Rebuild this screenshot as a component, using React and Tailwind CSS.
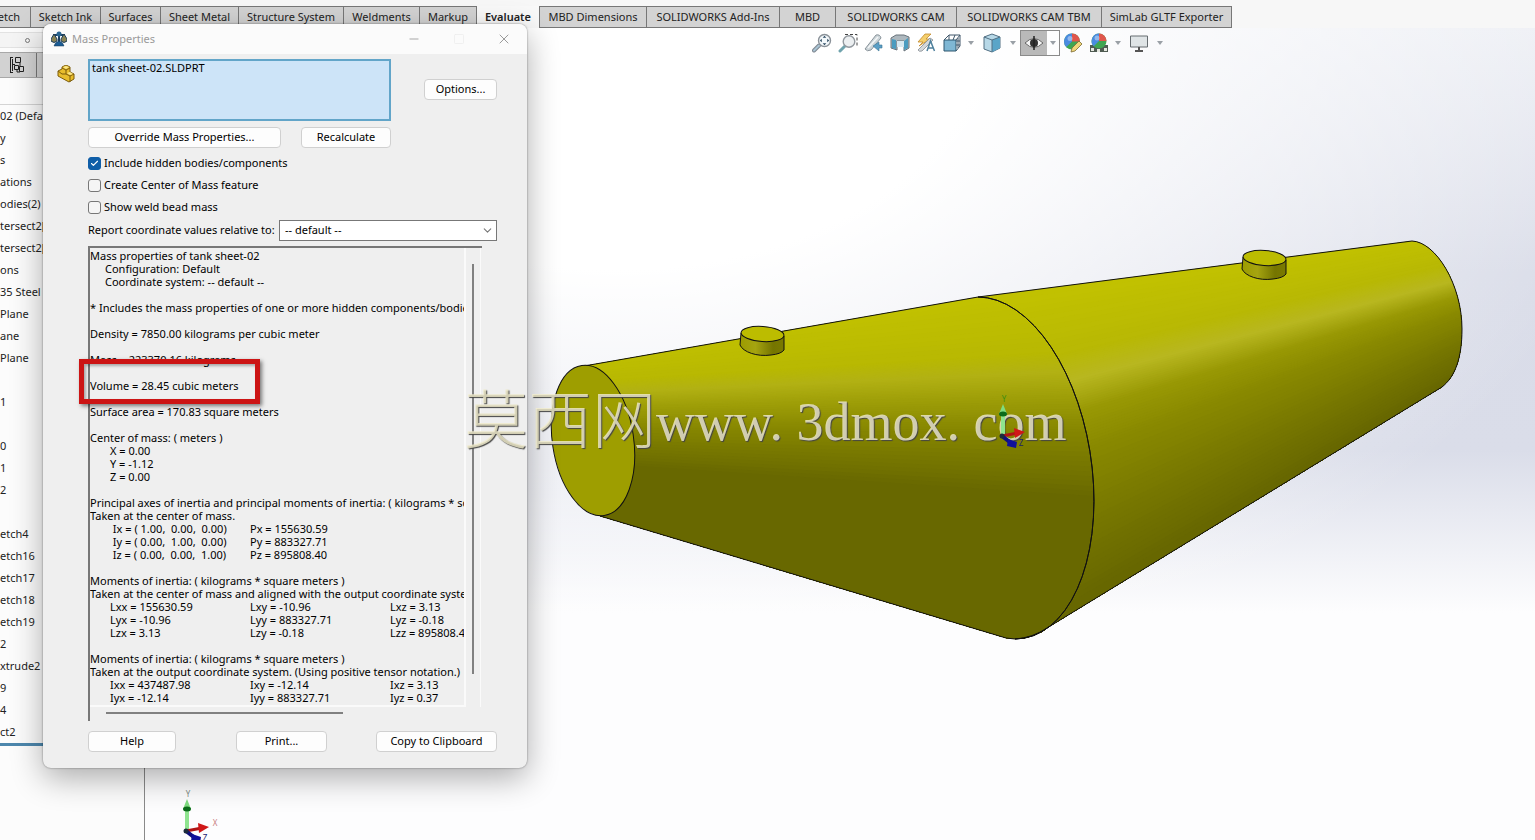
import React, {useState} from 'react';
import {Check, ChevronDown, Minus, Square, X} from "lucide-react";

const tabs = [
	{name: 'Sketch', width: 'w-[31px] justify-end'},
	{name: 'Sketch Ink', width: 'w-[70px] justify-center'},
	{name: 'Surfaces', width: 'w-[60px] justify-center'},
	{name: 'Sheet Metal', width: 'w-[78px] justify-center'},
	{name: 'Structure System', width: 'w-[105px] justify-center'},
	{name: 'Weldments', width: 'w-[76px] justify-center'},
	{name: 'Markup', width: 'w-[57px] justify-center'},
	{name: 'Evaluate', width: 'w-[63px] justify-center'},
	{name: 'MBD Dimensions', width: 'w-[107px] justify-center'},
	{name: 'SOLIDWORKS Add-Ins', width: 'w-[133px] justify-center'},
	{name: 'MBD', width: 'w-[56px] justify-center'},
	{name: 'SOLIDWORKS CAM', width: 'w-[121px] justify-center'},
	{name: 'SOLIDWORKS CAM TBM', width: 'w-[145px] justify-center'},
	{name: 'SimLab GLTF Exporter', width: 'w-[130px] justify-center'},
]

const treeItems = [
	'02 (Default', 'y', 's', 'ations', 'odies(2)', 'tersect2[1]', 'tersect2[2]', 'ons', '35 Steel',
	'Plane', 'ane', 'Plane', '', '1', '', '0', '1', '2', '', 'etch4', 'etch16', 'etch17', 'etch18',
	'etch19', '2', 'xtrude2', '9', '4', 'ct2',
]

const report = [
	'Mass properties of tank sheet-02',
	{indent: 'Configuration: Default'},
	{indent: 'Coordinate system: -- default --'},
	'',
	'* Includes the mass properties of one or more hidden components/bodies.',
	'',
	'Density = 7850.00 kilograms per cubic meter',
	'',
	'Mass = 223370.16 kilograms',
	'',
	'Volume = 28.45 cubic meters',
	'',
	'Surface area = 170.83 square meters',
	'',
	'Center of mass: ( meters )',
	{cols: ['X = 0.00']},
	{cols: ['Y = -1.12']},
	{cols: ['Z = 0.00']},
	'',
	'Principal axes of inertia and principal moments of inertia: ( kilograms * square meters )',
	'Taken at the center of mass.',
	{cols: [' Ix = ( 1.00,  0.00,  0.00)', 'Px = 155630.59']},
	{cols: [' Iy = ( 0.00,  1.00,  0.00)', 'Py = 883327.71']},
	{cols: [' Iz = ( 0.00,  0.00,  1.00)', 'Pz = 895808.40']},
	'',
	'Moments of inertia: ( kilograms * square meters )',
	'Taken at the center of mass and aligned with the output coordinate system.',
	{cols: ['Lxx = 155630.59', 'Lxy = -10.96', 'Lxz = 3.13']},
	{cols: ['Lyx = -10.96', 'Lyy = 883327.71', 'Lyz = -0.18']},
	{cols: ['Lzx = 3.13', 'Lzy = -0.18', 'Lzz = 895808.40']},
	'',
	'Moments of inertia: ( kilograms * square meters )',
	'Taken at the output coordinate system. (Using positive tensor notation.)',
	{cols: ['Ixx = 437487.98', 'Ixy = -12.14', 'Ixz = 3.13']},
	{cols: ['Iyx = -12.14', 'Iyy = 883327.71', 'Iyz = 0.37']},
]

// [y on the left side, y on the right side, rgb]
const leftShade = [
	[345, 275, [194, 194, 0]],
	[380, 350, [184, 184, 2]],
	[392, 370, [178, 177, 20]],
	[407, 396, [158, 158, 8]],
	[430, 432, [132, 132, 0]],
	[466, 500, [102, 102, 0]],
]

const rightShade = [
	[280, 228, [194, 194, 0]],
	[350, 262, [184, 184, 4]],
	[378, 280, [184, 183, 32]],
	[412, 297, [152, 152, 4]],
	[455, 315, [136, 136, 0]],
	[530, 345, [118, 118, 0]],
	[605, 378, [102, 102, 0]],
]

const STEPS = 14

const makeBands = (stops, xl, xr) => {
	const bands = []
	for (let i = 0; i < stops.length - 1; i++) {
		const [l1, r1, c1] = stops[i]
		const [l2, r2, c2] = stops[i + 1]
		for (let s = 0; s < STEPS; s++) {
			const t = s / STEPS
			const l = l1 + (l2 - l1) * t
			const r = r1 + (r2 - r1) * t
			const slope = (r - l) / (xr - xl)
			const color = c1.map((c, k) => Math.round(c + (c2[k] - c) * t))
			bands.push({
				points: `${xl - 120},${l - slope * 120} ${xr + 60},${r + slope * 60} ${xr + 60},720 ${xl - 120},720`,
				fill: `rgb(${color.join(',')})`,
			})
		}
	}
	return bands
}

const leftBands = makeBands(leftShade, 600, 1080)
const rightBands = makeBands(rightShade, 1075, 1455)

const LEFT_CONE = 'M584,366 L978,297 A94.9 172.4 -8.9 0 1 1015,639 L1006,638 L600,516 Z'
const RIGHT_CONE = 'M978,297 L1412,241 C1436,242 1462,285 1462,329 C1462,358 1455,377 1442,387 L1047,628 Q1032,638 1015,639 A94.9 172.4 -8.9 0 0 978,297 Z'

const Port = ({x, y}) => (
	<g stroke="#111" strokeWidth="1">
		<path d={`M${x},${y} L${x - 1},${y + 12} C${x + 2},${y + 19} ${x + 16},${y + 24} ${x + 30},${y + 22} Q${x + 40},${y + 21} ${x + 43},${y + 17} L${x + 43},${y + 3} Z`} fill="url(#portSide)"/>
		<ellipse cx={x + 21.5} cy={y + 1} rx="21.5" ry="7.5" transform={`rotate(4 ${x + 21.5} ${y + 1})`} fill="#bcbc00"/>
	</g>
)

const TankModel = () => (
	<svg className="absolute inset-0 h-full w-full" viewBox="145 28 1390 812" preserveAspectRatio="xMidYMid meet">
		<defs>
			<clipPath id="leftCone"><path d={LEFT_CONE}/></clipPath>
			<clipPath id="rightCone"><path d={RIGHT_CONE}/></clipPath>
			<linearGradient id="portSide">
				<stop offset="0" stopColor="#9c9c00"/>
				<stop offset="0.35" stopColor="#a5a410"/>
				<stop offset="0.75" stopColor="#757500"/>
				<stop offset="1" stopColor="#7a7a00"/>
			</linearGradient>
		</defs>
		<g clipPath="url(#rightCone)">
			<path d={RIGHT_CONE} fill="#c2c200"/>
			{rightBands.map((b, i) => <polygon key={i} points={b.points} fill={b.fill}/>)}
		</g>
		<g clipPath="url(#leftCone)">
			<path d={LEFT_CONE} fill="#c2c200"/>
			{leftBands.map((b, i) => <polygon key={i} points={b.points} fill={b.fill}/>)}
		</g>
		<path d={RIGHT_CONE} fill="none" stroke="#111" strokeWidth="1"/>
		<path d={LEFT_CONE} fill="none" stroke="#111" strokeWidth="1"/>
		<ellipse cx="593" cy="440.5" rx="40.6" ry="75.8" transform="rotate(-8.5 593 440.5)" fill="#9e9e00" stroke="#111"/>
		<Port x={741} y={333}/>
		<Port x={1243} y={257}/>
	</svg>
)

const Triad = ({labels}) => (
	<svg className="h-[56px] w-[44px] overflow-visible" viewBox="0 0 44 56">
		<path d="M9 41V19" stroke="#8fe48f" strokeWidth="4"/>
		<path d="M9 9l4 10H5z" fill="#7fdc7f"/>
		<ellipse cx="9" cy="19" rx="4" ry="2.5" fill="#0b6b1a"/>
		<path d="M8 41l16-3" stroke="#b01414" strokeWidth="3"/>
		<path d="M20 33l11 4-10 6z" fill="#d01818"/>
		<path d="M8 41l9 7" stroke="#10107c" strokeWidth="4"/>
		<path d="M14 44l9 3-1 6-9-2z" fill="#10109a"/>
		<circle cx="8" cy="41" r="2.5" fill="#1c2b3c"/>
		<text x="10" y="7" fontSize="8" fontFamily="Noto Sans, sans-serif" textAnchor="middle" fill={labels.y}>Y</text>
		{labels.x && <text x="37" y="36" fontSize="8" fontFamily="Noto Sans, sans-serif" textAnchor="middle" fill={labels.x}>X</text>}
		<text x="27" y="51" fontSize="8" fontFamily="Noto Sans, sans-serif" textAnchor="middle" fill="#1c1c70">Z</text>
	</svg>
)

const Caret = () => (
	<svg className="h-1 w-[6px]" viewBox="0 0 6 4"><path d="M0 0h6L3 4z" fill="#9aa0a6"/></svg>
)

const ToolButton = ({label, children}) => (
	<button type="button" aria-label={label} className="flex size-5 items-center justify-center">
		<svg className="size-5" viewBox="0 0 20 20" fill="none">{children}</svg>
	</button>
)

const ColorBall = ({cx, cy, r}) => (
	<g>
		<circle cx={cx} cy={cy} r={r} fill="#3fa551"/>
		<path d={`M${cx} ${cy}L${cx - r * 0.7} ${cy + r * 0.7}A${r} ${r} 0 0 1 ${cx} ${cy - r}Z`} fill="#4a8be0"/>
		<path d={`M${cx} ${cy}L${cx} ${cy - r}A${r} ${r} 0 0 1 ${cx + r} ${cy}Z`} fill="#e0564c"/>
		<circle cx={cx - 2} cy={cy - 3} r="2.5" fill="#fff" opacity="0.4"/>
	</g>
)

const ViewToolbar = () => (
	<div className="relative flex h-[30px] items-center pl-[667px]">
		<div className="flex items-center gap-[6px]">
			<ToolButton label="Zoom to Fit">
				<path d="M7 12.500l-5 5" stroke="#7f8790" strokeWidth="4" strokeLinecap="round"/>
				<path d="M7 12.500l-5 5" stroke="#a9c4d4" strokeWidth="2" strokeLinecap="round"/>
				<circle cx="12.500" cy="7.500" r="6" fill="#f3f8fb" stroke="#8b9299" strokeWidth="1.400"/>
				<path d="M12.500 2.800l1.800 2h-3.600zM12.500 12.200l1.800-2h-3.600zM7.800 7.500l2-1.800v3.600zM17.200 7.500l-2-1.800v3.600z" fill="#2c4a62"/>
			</ToolButton>
			<ToolButton label="Zoom to Area">
				<path d="M7 1.500h12v12" stroke="#444" strokeWidth="1" strokeDasharray="3 2"/>
				<path d="M7 13l-5 5" stroke="#6fa3ad" strokeWidth="3" strokeLinecap="round"/>
				<circle cx="11" cy="8.500" r="5.800" fill="#eceff1" stroke="#92989e" strokeWidth="1.400"/>
			</ToolButton>
			<ToolButton label="Previous View">
				<path d="M1 16L12 2q4-1 5 3L7 17q-4 2-6-1z" fill="#ccd5d9" stroke="#8a949b"/>
				<path d="M4 15L14 4" stroke="#f4f6f7" strokeWidth="1.500"/>
				<path d="M9 13l6-4v3h3v3h-3v3z" fill="#5b9fc6" stroke="#3d7696" strokeWidth="0.600"/>
			</ToolButton>
			<ToolButton label="Section View">
				<path d="M1 5l5-3h8l5 2v11l-5 3V8H7v9l-6-2z" fill="#aeb8be" stroke="#68737b"/>
				<path d="M2 6l4 1v9l-4-1zM14 8l4-3v10l-4 2z" fill="#4b9cc0"/>
				<path d="M7 8h7v6H7z" fill="#d8e9f1"/>
			</ToolButton>
			<ToolButton label="Dynamic Annotation Views">
				<path d="M9 1L2 9h5l-4 4 11-7h-4l5-5z" fill="#f4cf6d" stroke="#c38a2c" strokeWidth="0.800"/>
				<path d="M2 17L14 5l3 2L6 18q-3 1-4-1z" fill="#d3d8db" stroke="#858c92" strokeWidth="0.800"/>
				<path d="M11 18l3.500-10 4 10M12 15h5" stroke="#4f819d" strokeWidth="1.500"/>
			</ToolButton>
			<ToolButton label="View Orientation">
				<path d="M2 7l5-5h11v11l-4 5M7 2v5M13 2l-2 5M18 2l-4 5" stroke="#40576a"/>
				<path d="M2 7h12v11H2z" fill="#7fb7d4" stroke="#2f566f"/>
				<path d="M14 8h4M16 5v10M14 12h4" stroke="#40576a"/>
			</ToolButton>
		</div>
		<div className="ml-[6px] flex items-center gap-2">
			<Caret/>
			<ToolButton label="Display Style">
				<path d="M2 4l8-3 8 3v11l-8 4-8-3z" fill="#b7d8e7" stroke="#527084"/>
				<path d="M10 7l8-3v11l-8 4z" fill="#5aa5c8"/>
				<path d="M2 4l8 3v12M10 7l8-3" stroke="#527084"/>
			</ToolButton>
			<Caret/>
		</div>
		<div className="ml-[4px] flex h-[26px] w-[40px] items-center border border-[#8a8a8a]">
			<button type="button" aria-label="Hide/Show Items" className="flex h-full w-[26px] items-center justify-center bg-[#b9b9b9]">
				<svg className="h-4 w-5" viewBox="0 0 20 16" fill="none">
					<path d="M1 8q9-9 18 0q-9 9-18 0z" fill="#f4f4f4" stroke="#666"/>
					<circle cx="10" cy="8" r="4" fill="#333"/>
					<path d="M10 1v14" stroke="#222" strokeWidth="1.500"/>
				</svg>
			</button>
			<span className="flex flex-1 justify-center"><Caret/></span>
		</div>
		<div className="ml-[3px] flex items-center gap-[6px]">
			<ToolButton label="Edit Appearance">
				<ColorBall cx={9} cy={8.5} r={8}/>
				<path d="M8 19l1-4 7-7 3 3-7 7z" fill="#f0d67a" stroke="#7b6a31" strokeWidth="0.800"/>
			</ToolButton>
			<ToolButton label="Apply Scene">
				<path d="M1 12h18v7H1z" fill="#4f5b52"/>
				<path d="M2 15h3v3H2zM8 16h3v3H8zM15 15h3v3h-3z" fill="#e4e7df"/>
				<ColorBall cx={10} cy={8} r={7.5}/>
			</ToolButton>
		</div>
		<div className="ml-[6px] flex items-center gap-2">
			<Caret/>
			<ToolButton label="View Settings">
				<path d="M1.500 3h17v11h-17z" fill="#dfe4e6" stroke="#666c70"/>
				<path d="M10 14v4M6 18h8" stroke="#555" strokeWidth="2"/>
			</ToolButton>
			<Caret/>
		</div>
	</div>
)

const FeaturePanel = () => (
	<aside className="flex w-[145px] shrink-0 flex-col border-r border-[#8a8a8a] bg-[#fcfcfc]">
		<div className="mt-1 flex h-4 items-center border-y border-[#e2e2e2] bg-[#f4f4f4] pl-[25px]">
			<span className="size-[5px] rounded-full border border-[#777]"></span>
		</div>
		<div className="mt-1 flex h-[26px] border-y border-[#a8a8a8] bg-[#d2d2d2]">
			<button type="button" aria-label="Configuration Manager" className="flex w-[37px] items-center border-r border-[#777] pl-2">
				<svg className="size-[18px]" viewBox="0 0 18 18" fill="none" stroke="#222">
					<path d="M2.500 1v16M4.500 3v12M2 1.500h3M2 16.500h3M4 8.500h3"/>
					<path d="M7.500 1.500h5v5h-5zM6.500 9.500h4v4h-4zM11.500 10.500h4v5h-4zM12 7v4M9 14v2h3"/>
				</svg>
			</button>
		</div>
		<div className="h-[27px] border-b border-[#d4d4d4]"></div>
		<ul className="overflow-hidden border-b-[3px] border-[#4d87ad] text-[11px] leading-[22px] text-[#222]">
			{treeItems.map((item, i) => <li key={i} className="h-[22px] whitespace-nowrap">{item}</li>)}
		</ul>
	</aside>
)

const DialogButton = ({width, children}) => (
	<button type="button" className={`${width} h-[21px] rounded-[4px] border border-[#d0d0d0] bg-[#fdfdfd] text-black`}>
		{children}
	</button>
)

const CheckRow = ({id, label, checked, onChange}) => (
	<div className="flex h-[22px] items-center gap-[3px]">
		<span className="relative flex size-[13px]">
			<input id={id} type="checkbox" checked={checked} onChange={onChange}
			       className="size-[13px] appearance-none rounded-[3px] border border-[#777] bg-[#f5f5f5] checked:border-[#0f5ea8] checked:bg-[#0f5ea8]"/>
			{checked && <Check className="pointer-events-none absolute inset-0 m-auto size-[9px] text-white" strokeWidth={3}/>}
		</span>
		<label htmlFor={id}>{label}</label>
	</div>
)

const ReportLine = ({line}) => {
	if (typeof line === 'string') {
		return <div className="h-[13px]">{line}</div>
	}
	if (line.indent) {
		return <div className="h-[13px] pl-[15px]">{line.indent}</div>
	}
	return (
		<div className="flex h-[13px] pl-5">
			{line.cols.map(c => <span key={c} className="w-[140px] shrink-0">{c}</span>)}
		</div>
	)
}

const MassPropertiesDialog = () => {

	const [options, setOptions] = useState({hidden: true, center: false, weld: false})

	const toggle = (name) => setOptions({...options, [name]: !options[name]})

	return (
		<section role="dialog" aria-label="Mass Properties"
		         className="absolute left-[43px] top-6 w-[484px] overflow-hidden rounded-lg bg-[#efefef] text-[11px] text-black shadow-[0_10px_32px_rgba(0,0,0,0.32),0_0_2px_rgba(0,0,0,0.5)]">
			<header className="flex h-[30px] items-center bg-[#fbfbfb] pl-2 text-[#9a9a9a]">
				<svg className="size-4" viewBox="0 0 16 16">
					<path d="M8 1v11M2 4h12" stroke="#1d3f5e" strokeWidth="2"/>
					<circle cx="8" cy="3" r="2.5" fill="#2a6592"/>
					<path d="M0 8l3-5 3 5v2q-3 3-6 0zM10 8l3-5 3 5v2q-3 3-6 0z" fill="#8a8455" stroke="#1d3f5e"/>
					<path d="M3 15q1-4 5-5 4 1 5 5z" fill="#1b5c94" stroke="#163a57" strokeWidth="0.500"/>
				</svg>
				<h1 className="ml-[5px] flex-1 text-[11px]">Mass Properties</h1>
				<button type="button" aria-label="Minimize" className="flex w-[45px] justify-center"><Minus className="size-[14px]" strokeWidth={1.5}/></button>
				<button type="button" aria-label="Maximize" className="flex w-[45px] justify-center text-[#ececec]"><Square className="size-3" strokeWidth={1.5}/></button>
				<button type="button" aria-label="Close" className="flex w-[46px] justify-center"><X className="size-4" strokeWidth={1.5}/></button>
			</header>

			<div className="pb-4 pl-[45px] pr-[30px] pt-[5px]">
				<div className="relative flex items-start justify-between">
					<svg className="absolute -left-[31px] top-[6px] size-[18px]" viewBox="0 0 18 18">
						<path d="M1 6l4-2V2l4-2 4 2v5l4 2v5l-5 3-11-6z" fill="#e8bd2c" stroke="#7d5d0c"/>
						<path d="M5 3l4 2v4l4 2v6M13 11l4-2M9 5l4-2M1 6l4 3 4 0" fill="none" stroke="#7d5d0c"/>
						<path d="M6 2l3-1 3 1-3 2zM10 8l3-1 3 2-3 1z" fill="#fbe88a"/>
					</svg>
					<div className="h-[62px] w-[303px] border-2 border-[#62a5c9] bg-[#cde4f8] px-[2px] leading-[14px]">tank sheet-02.SLDPRT</div>
					<div className="pt-5"><DialogButton width="w-[73px]">Options...</DialogButton></div>
				</div>

				<div className="mt-[6px] flex gap-5">
					<DialogButton width="w-[193px]">Override Mass Properties...</DialogButton>
					<DialogButton width="w-[90px]">Recalculate</DialogButton>
				</div>

				<div className="mt-1">
					<CheckRow id="hidden" label="Include hidden bodies/components" checked={options.hidden} onChange={() => toggle('hidden')}/>
					<CheckRow id="center" label="Create Center of Mass feature" checked={options.center} onChange={() => toggle('center')}/>
					<CheckRow id="weld" label="Show weld bead mass" checked={options.weld} onChange={() => toggle('weld')}/>
				</div>

				<div className="mt-[2px] flex items-center justify-between">
					<label htmlFor="coords" className="whitespace-nowrap">Report coordinate values relative to:</label>
					<div className="relative w-[218px]">
						<select id="coords" className="h-[21px] w-full appearance-none border border-[#777] bg-white pl-[5px]">
							<option>-- default --</option>
						</select>
						<ChevronDown className="pointer-events-none absolute right-[3px] top-1 size-[13px] text-[#777]"/>
					</div>
				</div>

				<div className="mt-[5px] h-[475px] w-[394px] border-l-2 border-t-2 border-[#777]">
					<div className="flex">
						<div className="h-[459px] w-[376px] overflow-hidden whitespace-pre border-b-2 border-r-2 border-[#fafafa] pt-px leading-[13px]">
							{report.map((line, i) => <ReportLine key={i} line={line}/>)}
						</div>
						<div className="ml-[6px] mt-4 h-[410px] w-[2px] bg-[#808080]"></div>
						<div className="ml-[6px] h-[459px] w-px bg-[#fafafa]"></div>
					</div>
					<div className="ml-4 mt-[5px] h-[2px] w-[237px] bg-[#808080]"></div>
				</div>

				<div className="mt-[10px] flex justify-between">
					<DialogButton width="w-[88px]">Help</DialogButton>
					<DialogButton width="w-[91px] ml-[11px]">Print...</DialogButton>
					<DialogButton width="w-[121px]">Copy to Clipboard</DialogButton>
				</div>
			</div>
		</section>
	)
}

const App = () => {

	const [active, setActive] = useState('Evaluate')

	return (
		<div className="relative flex min-h-screen flex-col overflow-hidden bg-white font-['Noto_Sans',sans-serif]">
			<nav className="flex h-7 bg-[#f7f7f7] pt-[6px] text-[11px] text-[#222]">
				{tabs.map(tab => (
					<button key={tab.name} type="button" onClick={() => setActive(tab.name)}
					        className={`${tab.width} flex shrink-0 items-center overflow-hidden whitespace-nowrap border-r border-[#777] ${tab.name === 'Sketch' ? 'pr-[10px]' : ''} ${tab.name === active ? 'bg-[#f9f9f9] font-semibold' : 'border-y bg-[#d3d3d3]'}`}>
						{tab.name}
					</button>
				))}
			</nav>

			<div className="flex flex-1">
				<FeaturePanel/>
				<main className="relative flex-1 bg-[radial-gradient(ellipse_75%_85%_at_34%_0%,#fff_35%,rgba(255,255,255,0)_100%),linear-gradient(180deg,#eceef4_0%,#d9dce8_30%,#dadde9_52%,#fdfdfe_72%)]">
					<TankModel/>
					<ViewToolbar/>
					<div className="absolute bottom-[-6px] left-[33px]"><Triad labels={{x: '#c98080', y: '#7d8c84'}}/></div>
				</main>
			</div>

			<MassPropertiesDialog/>

			<div className="pointer-events-none absolute left-[79px] top-[359px] h-[45px] w-[181px] border-[5px] border-[#cc1414] shadow-[2px_2px_4px_rgba(0,0,0,0.5),inset_2px_2px_3px_rgba(0,0,0,0.3)]"></div>

			<div className="pointer-events-none absolute left-[464px] top-[380px] flex items-start whitespace-pre text-[#f4efce]/80 [text-shadow:1px_1px_1px_#444]">
				<span className="font-['Noto_Sans_CJK_SC',sans-serif] text-[64px] font-light leading-[70px]">莫西网</span>
				<span className="font-['Liberation_Serif',serif] text-[54px] leading-[84px]">www. 3dmox. com</span>
			</div>
			<div className="pointer-events-none absolute left-[994px] top-[395px]"><Triad labels={{y: '#3f8f10'}}/></div>
		</div>
	)
}

export default App;
